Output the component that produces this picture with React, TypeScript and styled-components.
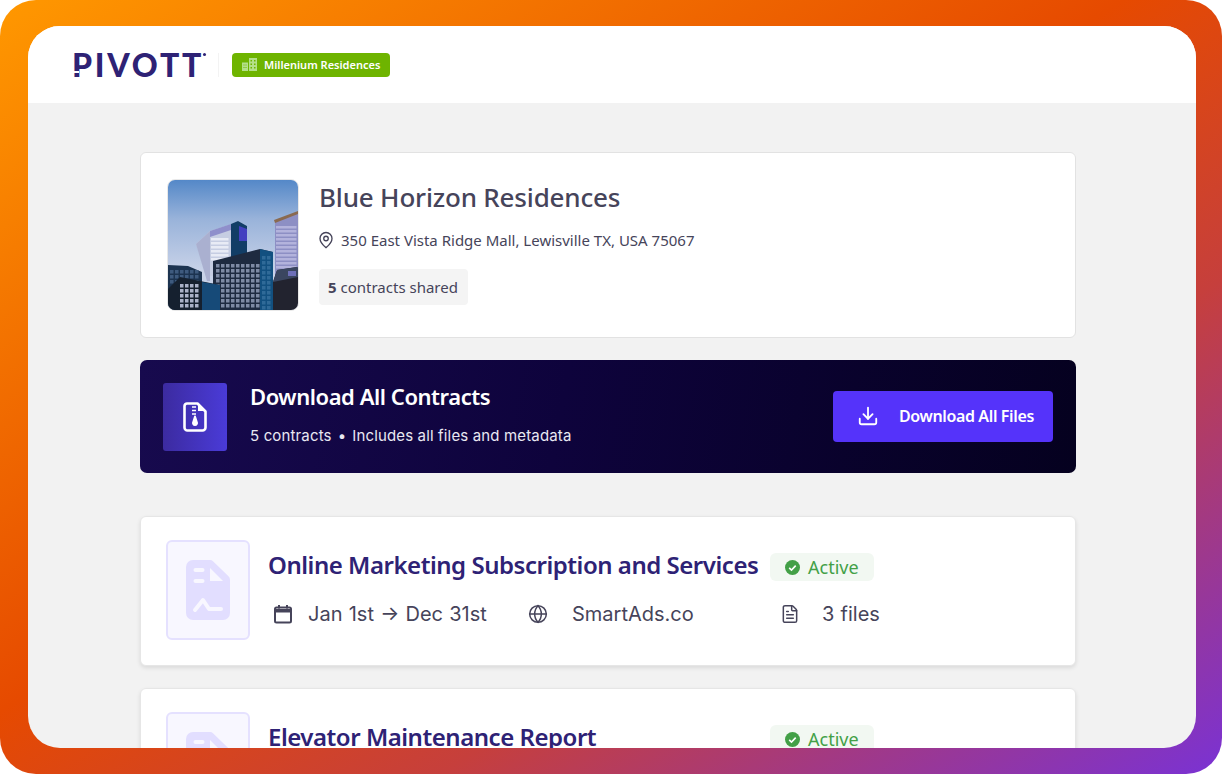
import * as React from "react";
import styled, { createGlobalStyle } from "styled-components";
import { Download, FileText, Globe, MapPin } from "lucide-react";

interface Contract {
  title: string;
  period?: string;
  vendor?: string;
  files?: string;
}

const contracts: Contract[] = [
  {
    title: "Online Marketing Subscription and Services",
    period: "Jan 1st → Dec 31st",
    vendor: "SmartAds.co",
    files: "3 files"
  },
  { title: "Elevator Maintenance Report" }
];

const GlobalStyle = createGlobalStyle`
  html, body {
    margin: 0;
    padding: 0;
    background: #ffffff;
  }
`;

const Frame = styled.div`
  box-sizing: border-box;
  width: 1222px;
  height: 774px;
  padding: 26px 26px 26px 28px;
  border-radius: 36px;
  background: linear-gradient(to bottom right, #ff9800 0%, #e64a00 46%, #c63f3c 68%, #7a32d4 100%);
  font-family: "Noto Sans", sans-serif;
`;

const Window = styled.div`
  height: 722px;
  border-radius: 32px;
  overflow: hidden;
  background: #f2f2f2;
`;

const TopBar = styled.header`
  display: flex;
  align-items: center;
  height: 77px;
  padding-left: 44px;
  background: #ffffff;
`;

const Logo = styled.div`
  position: relative;
  width: 134px;
  font-family: "Lato", sans-serif;
  font-size: 32px;
  line-height: 26px;
  font-weight: 900;
  letter-spacing: 2.8px;
  white-space: nowrap;
  color: #2e2275;
`;

const LogoMark = styled.span`
  position: absolute;
  top: 1px;
  right: 0;
  width: 3px;
  height: 3px;
  border-radius: 50%;
  background: #2e2275;
`;

const LogoNotch = styled.span`
  position: absolute;
  left: 0;
  bottom: 5px;
  width: 7px;
  height: 2px;
  background: #ffffff;
`;

const Divider = styled.div`
  width: 1px;
  height: 24px;
  margin: 0 13px 0 12px;
  background: #f3f3f3;
`;

const SiteBadge = styled.div`
  display: flex;
  align-items: center;
  gap: 7px;
  box-sizing: border-box;
  width: 158px;
  height: 24px;
  padding-left: 10px;
  border-radius: 4px;
  background: #6eb400;
  color: #ffffff;
  font-size: 11px;
  font-weight: 600;
  white-space: nowrap;
`;

const Content = styled.main`
  display: flex;
  flex-direction: column;
  width: 936px;
  padding: 49px 0 0 112px;
`;

const PropertyCard = styled.section`
  display: flex;
  gap: 20px;
  box-sizing: border-box;
  height: 186px;
  padding: 26px;
  border: 1px solid #e2e2e2;
  border-radius: 6px;
  background: #ffffff;
`;

const Photo = styled.svg`
  display: block;
  flex: none;
  width: 132px;
  height: 132px;
  border-radius: 8px;
  border: 1px solid #e8e8e8;
  box-sizing: border-box;
`;

const PropertyInfo = styled.div`
  display: flex;
  flex-direction: column;
  align-items: flex-start;
`;

const PropertyName = styled.h1`
  margin: 0;
  font-size: 26px;
  line-height: 36px;
  font-weight: 500;
  letter-spacing: -0.18px;
  color: #46445a;
`;

const Address = styled.div`
  display: flex;
  align-items: center;
  gap: 6px;
  margin: 15px 0 0 -2px;
  font-size: 15px;
  line-height: 20px;
  color: #46445a;
`;

const SharedCount = styled.div`
  margin-top: 19px;
  padding: 0 10px 0 9px;
  border-radius: 4px;
  background: #f4f4f4;
  font-size: 15px;
  line-height: 36px;
  color: #46445a;

  b {
    font-weight: 700;
  }
`;

const DownloadBanner = styled.section`
  display: flex;
  align-items: center;
  box-sizing: border-box;
  height: 113px;
  margin-top: 22px;
  padding: 0 23px;
  border-radius: 7px;
  background: linear-gradient(100deg, #170a4e 0%, #0e033c 45%, #05011f 100%);
`;

const ZipTile = styled.div`
  display: flex;
  align-items: center;
  justify-content: center;
  flex: none;
  width: 64px;
  height: 68px;
  border-radius: 3px;
  background: linear-gradient(90deg, #3c2ba0 0%, #4a3bd8 100%);
`;

const BannerText = styled.div`
  flex: 1;
  margin: 0 0 6px 23px;
`;

const BannerTitle = styled.h2`
  margin: 0;
  font-size: 22px;
  line-height: 30px;
  font-weight: 600;
  letter-spacing: -0.45px;
  color: #ffffff;
`;

const BannerMeta = styled.div`
  display: flex;
  gap: 6px;
  margin-top: 15px;
  font-family: "Inter", sans-serif;
  font-size: 15px;
  line-height: 20px;
  letter-spacing: 0.15px;
  color: #e9e8f2;
`;

const DownloadButton = styled.button`
  display: flex;
  align-items: center;
  gap: 20px;
  box-sizing: border-box;
  width: 220px;
  height: 51px;
  padding: 0 0 2px 24px;
  border: none;
  border-radius: 4px;
  background: #5533fa;
  color: #ffffff;
  font-family: "Noto Sans", sans-serif;
  font-size: 16px;
  font-weight: 600;
  letter-spacing: -0.37px;
`;

const ContractList = styled.div`
  display: flex;
  flex-direction: column;
  gap: 22px;
  margin-top: 43px;
`;

const ContractCard = styled.article`
  display: flex;
  gap: 18px;
  box-sizing: border-box;
  flex: none;
  height: 150px;
  padding: 23px 25px;
  border: 1px solid #e6e6e6;
  border-radius: 6px;
  background: #ffffff;
  box-shadow: 0 2px 4px rgba(0, 0, 0, 0.1);
`;

const DocTile = styled.div`
  display: flex;
  align-items: center;
  justify-content: center;
  box-sizing: border-box;
  flex: none;
  width: 84px;
  height: 100px;
  border: 2px solid #e5e1ff;
  border-radius: 6px;
  background: #f8f7ff;
`;

const ContractBody = styled.div`
  display: flex;
  flex-direction: column;
`;

const TitleRow = styled.div`
  display: grid;
  grid-template-columns: 502px auto;
  align-items: center;
  height: 50px;
`;

const ContractTitle = styled.h3`
  margin: 0;
  font-size: 24px;
  line-height: 36px;
  font-weight: 600;
  letter-spacing: -0.47px;
  white-space: nowrap;
  color: #2e2275;
`;

const StatusPill = styled.div`
  display: flex;
  align-items: center;
  gap: 8px;
  box-sizing: border-box;
  width: 104px;
  height: 28px;
  margin-top: 4px;
  padding-left: 15px;
  border-radius: 6px;
  background: #f2f8f2;
  color: #43a047;
  font-size: 18px;
`;

const MetaRow = styled.div`
  display: grid;
  grid-template-columns: 255px 252px auto;
  margin-top: 4px;
  padding-left: 5px;
  color: #46445a;
`;

const MetaItem = styled.div`
  display: flex;
  align-items: center;
  height: 40px;
  font-family: "Inter", sans-serif;
  font-size: 20px;
  word-spacing: 0.6px;
  white-space: nowrap;
`;

const MetaIcon = styled.span<{ $gap: number }>`
  display: flex;
  width: 20px;
  margin-right: ${p => p.$gap}px;
`;

const BuildingsIcon = () => (
  <svg width="15" height="13" viewBox="0 0 15 13" fill="#b4e08a">
    <path d="M0 4.5h6V13H0zM7 0h8v13H7z" />
    <path
      d="M1.5 6.5h1v1h-1zM3.5 6.5h1v1h-1zM1.5 9h1v1h-1zM3.5 9h1v1h-1zM8.5 2h1.5v1.5H8.500zM12 2h1.500v1.500H12zM8.500 5.500h1.500V7H8.500zM12 5.500h1.500V7H12zM8.500 9h1.500v1.500H8.500zM12 9h1.500v1.500H12z"
      fill="#6eb400"
    />
  </svg>
);

const ZipIcon = () => (
  <svg width="24" height="30" viewBox="0 0 24 30" fill="none">
    <path
      d="M4 1.500h10.500L22.500 9.500V25.500a3 3 0 0 1-3 3H4.500a3 3 0 0 1-3-3V4a2.500 2.500 0 0 1 2.500-2.500z"
      stroke="#ffffff"
      strokeWidth="2.600"
      strokeLinejoin="round"
    />
    <path d="M15 2v7h7z" fill="#ffffff" />
    <path d="M9 5h4M9 8.500h4M9 12h4" stroke="#ffffff" strokeWidth="1.600" />
    <path d="M11 14.500a1 1 0 0 1 2 0l1.600 5a3 3 0 1 1-5.200 0z" fill="#ffffff" />
  </svg>
);

const ContractIcon = () => (
  <svg width="44" height="60" viewBox="0 0 44 60" fill="none">
    <path
      d="M7 0h17a4 4 0 0 1 3 1.300l15.500 15a5 5 0 0 1 1.500 3.500V53a7 7 0 0 1-7 7H7a7 7 0 0 1-7-7V7a7 7 0 0 1 7-7z"
      fill="#e2deff"
    />
    <path d="M24 8v13h13z" fill="#f8f7ff" />
    <path
      d="M9.500 10h7M9.500 21h7"
      stroke="#f8f7ff"
      strokeWidth="4"
      strokeLinecap="round"
    />
    <path
      d="M9 50l8-10 6 9h12"
      stroke="#f8f7ff"
      strokeWidth="4"
      strokeLinecap="round"
      strokeLinejoin="round"
    />
  </svg>
);

const CalendarIcon = () => (
  <svg width="20" height="20" viewBox="0 0 20 20" fill="none">
    <rect x="2" y="3.500" width="16" height="15" rx="1.500" stroke="#46445a" strokeWidth="2" />
    <path d="M2 5h16v3.500H2z" fill="#46445a" />
    <path d="M6 1v3.500M14 1v3.500" stroke="#46445a" strokeWidth="2" />
  </svg>
);

const CheckBadge = () => (
  <svg width="15" height="15" viewBox="0 0 15 15">
    <circle cx="7.500" cy="7.500" r="7.500" fill="#43a047" />
    <path
      d="M4.200 7.800l2.300 2.200 4.200-4.400"
      stroke="#ffffff"
      strokeWidth="1.600"
      fill="none"
    />
  </svg>
);

const windows = (x: number, y: number, cols: number, rows: number, dx: number, dy: number, fill: string) => {
  const cells: React.ReactElement[] = [];
  for (let r = 0; r < rows; r++) {
    for (let c = 0; c < cols; c++) {
      cells.push(
        <rect key={`${x}-${y}-${r}-${c}`} x={x + c * dx} y={y + r * dy} width={dx - 1.500} height={dy - 1.500} fill={fill} />
      );
    }
  }
  return cells;
};

const BuildingPhoto = () => (
  <Photo viewBox="0 0 130 130" preserveAspectRatio="none">
    <defs>
      <linearGradient id="sky" x1="0" y1="0" x2="0" y2="1">
        <stop offset="0" stopColor="#5488c8" />
        <stop offset="0.3" stopColor="#99b3da" />
        <stop offset="0.7" stopColor="#c8d2e8" />
      </linearGradient>
    </defs>
    <rect width="130" height="130" fill="url(#sky)" />
    {/* tower on the right */}
    <path d="M107 42l23-10v72h-23z" fill="#8d8fc4" />
    <path d="M106 40l24-9v3l-23 9z" fill="#8a6a50" />
    {windows(108, 46, 1, 14, 22, 4, "#b3b3dc")}
    {/* pale tower behind */}
    <path d="M28 64l14-13 22-7 6-3 9 5v10l-2 40H39z" fill="#c6cde2" />
    <path d="M28 64l14-13v50h-3z" fill="#aab0d0" />
    {windows(43, 58, 1, 6, 19, 4, "#e8ebf5")}
    <path d="M42 51l21-7v6l-21 7z" fill="#8f8fcb" />
    <path d="M63 44l7-3 9 5v32H63z" fill="#123d66" />
    <path d="M71 46l8 3v12h-8z" fill="#4340c0" />
    {/* dark block in front */}
    <path d="M45 81l47-12 13 3v58H45z" fill="#1e2a40" />
    <path d="M92 69l13 3v58H92z" fill="#125080" />
    {windows(48, 84, 9, 9, 5, 5, "#7e8aa4")}
    {windows(94, 76, 2, 11, 5, 5, "#2f6a98")}
    {/* low block on the right */}
    <path d="M105 102l4-12 20-3 1 1v42h-25z" fill="#22232f" />
    <path d="M109 90l20-3 1 1v9l-25 5z" fill="#3a4660" />
    <path d="M120 91h8v5h-8z" fill="#6d6fb8" />
    {/* low blocks on the left */}
    <path d="M0 85l20 1 14 6v38H0z" fill="#1c3350" />
    {windows(2, 90, 6, 3, 5, 5, "#3e5a7e")}
    <path d="M0 109l12-12 40 8v25H0z" fill="#15202f" />
    <path d="M34 102l18 3v25H34z" fill="#164a78" />
    {windows(12, 104, 4, 5, 5, 5, "#a9b1c8")}
  </Photo>
);

export default function App() {
  return (
    <Frame>
      <GlobalStyle />
      <Window>
        <TopBar>
          <Logo>
            PIVOTT
            <LogoNotch />
            <LogoMark />
          </Logo>
          <Divider />
          <SiteBadge>
            <BuildingsIcon />
            Millenium Residences
          </SiteBadge>
        </TopBar>
        <Content>
          <PropertyCard>
            <BuildingPhoto />
            <PropertyInfo>
              <PropertyName>Blue Horizon Residences</PropertyName>
              <Address>
                <MapPin size={18} strokeWidth={1.8} />
                350 East Vista Ridge Mall, Lewisville TX, USA 75067
              </Address>
              <SharedCount>
                <b>5</b> contracts shared
              </SharedCount>
            </PropertyInfo>
          </PropertyCard>
          <DownloadBanner>
            <ZipTile>
              <ZipIcon />
            </ZipTile>
            <BannerText>
              <BannerTitle>Download All Contracts</BannerTitle>
              <BannerMeta>
                <span>5 contracts</span>
                <span>•</span>
                <span>Includes all files and metadata</span>
              </BannerMeta>
            </BannerText>
            <DownloadButton>
              <Download size={22} strokeWidth={2} />
              Download All Files
            </DownloadButton>
          </DownloadBanner>
          <ContractList>
            {contracts.map(contract => (
              <ContractCard key={contract.title}>
                <DocTile>
                  <ContractIcon />
                </DocTile>
                <ContractBody>
                  <TitleRow>
                    <ContractTitle>{contract.title}</ContractTitle>
                    <StatusPill>
                      <CheckBadge />
                      Active
                    </StatusPill>
                  </TitleRow>
                  {contract.period && (
                    <MetaRow>
                      <MetaItem>
                        <MetaIcon $gap={15}>
                          <CalendarIcon />
                        </MetaIcon>
                        {contract.period}
                      </MetaItem>
                      <MetaItem>
                        <MetaIcon $gap={24}>
                          <Globe size={22} strokeWidth={1.8} />
                        </MetaIcon>
                        {contract.vendor}
                      </MetaItem>
                      <MetaItem>
                        <MetaIcon $gap={22}>
                          <FileText size={20} strokeWidth={1.8} />
                        </MetaIcon>
                        {contract.files}
                      </MetaItem>
                    </MetaRow>
                  )}
                </ContractBody>
              </ContractCard>
            ))}
          </ContractList>
        </Content>
      </Window>
    </Frame>
  );
}
